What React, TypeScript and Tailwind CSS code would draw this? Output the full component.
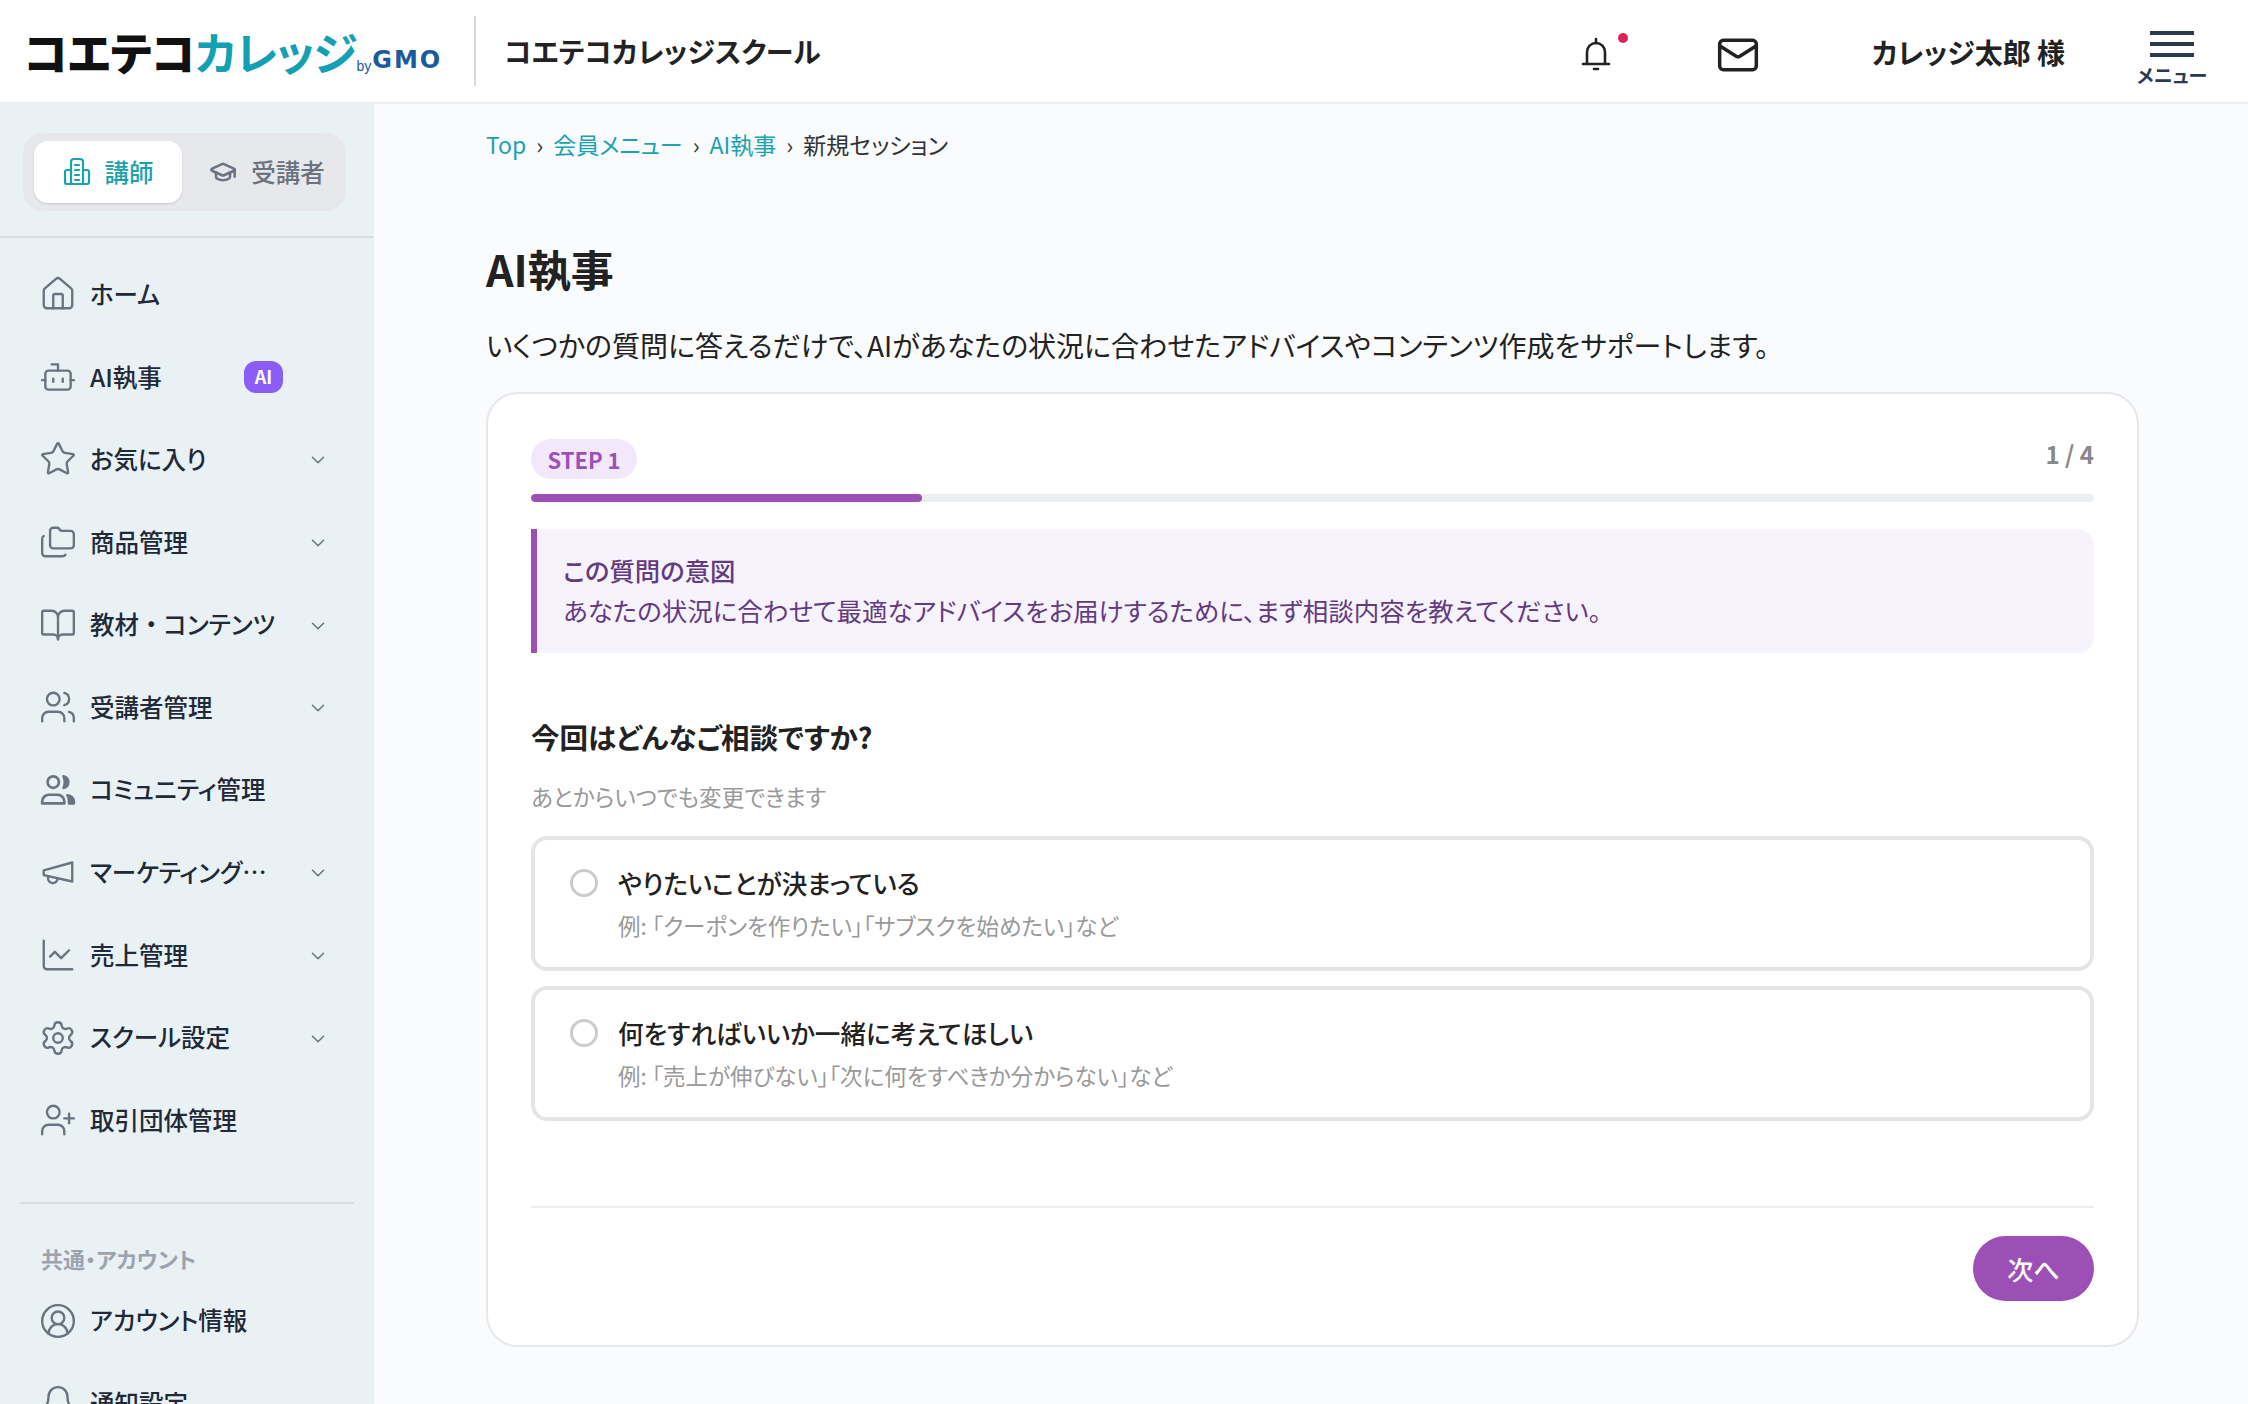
import {
  BookOpen,
  Bot,
  ChartLine,
  ChevronDown,
  CircleUserRound,
  Folders,
  GraduationCap,
  House,
  Mail,
  Settings,
  Star,
  UserPlus,
  Users,
} from 'lucide-react';
import type { ReactNode } from 'react';

const jp = "font-['Noto_Sans_CJK_JP','Noto_Sans',sans-serif] [font-feature-settings:'palt']";

function MegaphoneIcon() {
  return (
    <svg width="38" height="38" viewBox="0 0 24 24" fill="none" stroke="currentColor" strokeWidth="1.5" strokeLinecap="round" strokeLinejoin="round">
      <path d="m3 11 18-5v12L3 14v-3z" />
      <path d="M11.6 16.8a3 3 0 1 1-5.8-1.6" />
    </svg>
  );
}

function CommunityIcon() {
  return (
    <svg width="38" height="38" viewBox="0 0 24 24" fill="none" stroke="currentColor" strokeWidth="1.7" strokeLinecap="round" strokeLinejoin="round">
      <circle cx="9" cy="7" r="3.6" />
      <path d="M2 20.500v-1.200A4.300 4.300 0 0 1 6.300 15h5.400a4.300 4.300 0 0 1 4.300 4.300v1.200z" />
      <path d="M15.500 3.300a3.800 3.800 0 0 1 0 7.400c1-2.200 1-5.200 0-7.400z" fill="currentColor" />
      <path d="M18 15.300a4.200 4.200 0 0 1 4 4v1.200h-3v-1.500c0-1.400-.3-2.600-1-3.700z" fill="currentColor" />
    </svg>
  );
}

function BellIcon() {
  return (
    <svg width="32" height="36" viewBox="0 0 32 36" fill="none" stroke="#222" strokeWidth="2.6" strokeLinecap="round" strokeLinejoin="round">
      <path d="M3 27h26" />
      <path d="M7 27V15c0-5 4-9 9-9s9 4 9 9v12" />
      <path d="M16 2v4" />
      <path d="M14 32h4" />
    </svg>
  );
}

function BellIconGrey() {
  return (
    <svg width="38" height="38" viewBox="0 0 24 24" fill="none" stroke="currentColor" strokeWidth="1.5" strokeLinecap="round" strokeLinejoin="round">
      <path d="M10.300 21a2 2 0 0 0 3.400 0" />
      <path d="M3.300 15.300A1 1 0 0 0 4 17h16a1 1 0 0 0 .7-1.700C19.400 14 18 12.500 18 8A6 6 0 0 0 6 8c0 4.500-1.400 6-2.700 7.300" />
    </svg>
  );
}

function TeacherIcon() {
  return (
    <svg width="28" height="30" viewBox="0 0 28 30" fill="none" stroke="#1aa3ad" strokeWidth="2.2" strokeLinecap="round" strokeLinejoin="round">
      <path d="M8 27V5a3 3 0 0 1 3-3h6a3 3 0 0 1 3 3v22" />
      <path d="M8 13H4a2 2 0 0 0-2 2v10a2 2 0 0 0 2 2h20a2 2 0 0 0 2-2V15a2 2 0 0 0-2-2h-4" />
      <path d="M12 8h4M12 13h4M12 18h4M12 23h4" />
    </svg>
  );
}

type NavItem = { id: string; label: ReactNode; icon: ReactNode; arrow?: boolean; badge?: boolean };

const icon = { size: 38, strokeWidth: 1.5 };

const navItems: NavItem[] = [
  { id: 'home', label: 'ホーム', icon: <House {...icon} /> },
  { id: 'ai', label: 'AI執事', icon: <Bot {...icon} />, badge: true },
  { id: 'fav', label: 'お気に入り', icon: <Star {...icon} />, arrow: true },
  { id: 'items', label: '商品管理', icon: <Folders {...icon} />, arrow: true },
  {
    id: 'contents',
    label: (
      <>
        教材<span className="[font-feature-settings:normal]">・</span>コンテンツ
      </>
    ),
    icon: <BookOpen {...icon} />,
    arrow: true,
  },
  { id: 'students', label: '受講者管理', icon: <Users {...icon} />, arrow: true },
  { id: 'community', label: 'コミュニティ管理', icon: <CommunityIcon /> },
  { id: 'marketing', label: 'マーケティング…', icon: <MegaphoneIcon />, arrow: true },
  { id: 'sales', label: '売上管理', icon: <ChartLine {...icon} />, arrow: true },
  { id: 'school', label: 'スクール設定', icon: <Settings {...icon} />, arrow: true },
  { id: 'group', label: '取引団体管理', icon: <UserPlus {...icon} /> },
];

function NavRow({ item }: { item: NavItem }) {
  return (
    <div className="flex h-[82.6px] shrink-0 items-center pl-[38px] pr-[45px]">
      <span className="flex w-[40px] shrink-0 justify-center text-[#6b7280]">{item.icon}</span>
      <span className="ml-[12px] flex-1 whitespace-nowrap text-[24.5px] font-medium text-[#1f2937]">{item.label}</span>
      {item.badge && (
        <span className="mr-[46px] flex h-[32px] w-[39px] items-center justify-center rounded-[12px] bg-[#8b5cf6] text-[18px] font-bold text-white">
          AI
        </span>
      )}
      {item.arrow && <ChevronDown size={22} strokeWidth={1.7} className="mt-[2px] text-[#6b7280]" />}
    </div>
  );
}

function Sidebar() {
  return (
    <aside className="flex w-[374px] shrink-0 flex-col overflow-hidden bg-[#e9f1f5]">
      <div className="h-[134px] shrink-0 border-b-2 border-[#d9dee3] px-[23px] pt-[29px]">
        <div className="flex h-[78px] w-[323px] items-center rounded-[20px] bg-[#e6e8eb] pl-[11px]">
          <div className="flex h-[62px] w-[148px] items-center justify-center gap-[14px] rounded-[14px] bg-white text-[24.5px] font-medium text-[#1aa3ad] shadow-sm">
            <TeacherIcon />
            講師
          </div>
          <div className="flex flex-1 items-center justify-center gap-[14px] pl-[6px] text-[24.5px] font-medium text-[#6b7280]">
            <GraduationCap size={28} strokeWidth={2.2} />
            受講者
          </div>
        </div>
      </div>
      <nav className="flex shrink-0 flex-col pt-[15px]">
        {navItems.map((item) => (
          <NavRow key={item.id} item={item} />
        ))}
      </nav>
      <div className="mx-[20px] mt-[40px] shrink-0 border-t-2 border-[#d9dee3]" />
      <div className="mt-[41px] shrink-0 pl-[41px] text-[22px] font-bold leading-[26px] text-[#9ca3af]">共通・アカウント</div>
      <div className="shrink-0 pt-[9px]">
        <NavRow item={{ id: 'account', label: 'アカウント情報', icon: <CircleUserRound {...icon} /> }} />
        <NavRow item={{ id: 'notify', label: '通知設定', icon: <BellIconGrey /> }} />
      </div>
    </aside>
  );
}

function Header() {
  return (
    <header className="flex h-[104px] shrink-0 items-center border-b-2 border-[#eceef2] bg-white pl-[24px]">
      <div className="flex items-end whitespace-nowrap leading-none">
        <span className="text-[45px] font-black tracking-[-0.5px] text-[#111]">コエテコ</span>
        <span className="text-[45px] font-bold tracking-[-1px] text-[#12a0b2]">カレッジ</span>
        <span className="mb-[1px] font-['Liberation_Sans',sans-serif] text-[14px] text-[#1c5a9c]">by</span>
        <span className="ml-[1px] font-['DejaVu_Sans',sans-serif] text-[24px] font-bold leading-[28px] tracking-[2px] text-[#1c5a9c]">GMO</span>
      </div>
      <div className="ml-[32px] h-[70px] w-[2px] bg-[#d8d8d8]" />
      <span className="ml-[28px] text-[28px] font-bold text-[#222]">コエテコカレッジスクール</span>
      <div className="ml-auto flex items-center">
        <div className="relative mt-[8px] flex h-[40px] w-[32px] items-center justify-center">
          <BellIcon />
          <span className="absolute right-[-16px] top-[-2px] h-[10px] w-[10px] rounded-full bg-[#d9245a]" />
        </div>
        <Mail size={44} strokeWidth={1.9} className="ml-[104px] mt-[8px] text-[#222]" />
        <span className="ml-[112px] mt-[2px] whitespace-nowrap text-[28px] font-bold text-[#222]">カレッジ太郎 様</span>
        <div className="ml-[72px] mr-[41px] flex w-[70px] flex-col items-center pt-[10px]">
          <div className="flex w-[44px] flex-col gap-[7px] pt-[2px]">
            <span className="h-[4px] bg-[#2a3a50]" />
            <span className="h-[4px] bg-[#2a3a50]" />
            <span className="h-[4px] bg-[#2a3a50]" />
          </div>
          <span className="mt-[8px] whitespace-nowrap text-[19px] font-bold leading-none text-[#2a3a50]">メニュー</span>
        </div>
      </div>
    </header>
  );
}

function Option({ title, note }: { title: string; note: string }) {
  return (
    <div className="flex h-[135px] rounded-[16px] border-[4px] border-[#e5e5e5] pl-[35px] pt-[25px]">
      <span className="mt-[4px] h-[28px] w-[28px] shrink-0 rounded-full border-[3px] border-[#cccccc]" />
      <div className="ml-[20px]">
        <div className="text-[25.6px] font-medium leading-[36px] text-[#222]">{title}</div>
        <div className="mt-[8px] text-[22.5px] leading-[32px] text-[#999]">{note}</div>
      </div>
    </div>
  );
}

function Main() {
  return (
    <main className="min-w-0 flex-1 overflow-hidden bg-[#fafbfd] pl-[112px] pr-[109px]">
      <div className="flex h-[80px] items-center gap-[10px] text-[23px]">
        <span className="text-[#1aa3ad]">Top</span>
        <span className="text-[#333]">›</span>
        <span className="text-[#1aa3ad]">会員メニュー</span>
        <span className="text-[#333]">›</span>
        <span className="text-[#1aa3ad]">AI執事</span>
        <span className="text-[#333]">›</span>
        <span className="text-[#333]">新規セッション</span>
      </div>
      <h1 className="mt-[51px] text-[43px] font-bold leading-[66px] text-[#222]">AI執事</h1>
      <p className="mt-[24px] whitespace-nowrap text-[28px] leading-[40px] text-[#222]">
        いくつかの質問に答えるだけで、AIがあなたの状況に合わせたアドバイスやコンテンツ作成をサポートします。
      </p>
      <section className="mt-[27px] h-[955px] rounded-[32px] border-2 border-[#e5e7eb] bg-white px-[43px] pt-[45px]">
        <div className="flex items-start justify-between">
          <span className="flex h-[40px] w-[106px] items-center justify-center rounded-full bg-[#f3e8fb] pt-[1px] text-[22px] font-bold text-[#9b51b5]">
            STEP 1
          </span>
          <span className="mt-[-3px] text-[24px] font-bold leading-[36px] text-[#888]">1 / 4</span>
        </div>
        <div className="mt-[15px] h-[8px] overflow-hidden rounded-full bg-[#eceff1]">
          <div className="h-full w-1/4 rounded-full bg-[#9c50b6]" />
        </div>
        <div className="mt-[27px] h-[124px] rounded-r-[16px] border-l-[6px] border-[#9c50b6] bg-[#f6f3fd] pl-[26px] pt-[22px] text-[#643a80]">
          <div className="text-[25.4px] font-medium leading-[38px]">この質問の意図</div>
          <div className="mt-[1px] text-[25.5px] leading-[40px]">あなたの状況に合わせて最適なアドバイスをお届けするために、まず相談内容を教えてください。</div>
        </div>
        <h2 className="mt-[61px] text-[28.5px] font-bold leading-[46px] text-[#222]">今回はどんなご相談ですか?</h2>
        <p className="mt-[19px] text-[22.6px] leading-[36px] text-[#999]">あとからいつでも変更できます</p>
        <div className="mt-[21px] flex flex-col gap-[15px]">
          <Option title="やりたいことが決まっている" note="例: 「クーポンを作りたい」「サブスクを始めたい」など" />
          <Option title="何をすればいいか一緒に考えてほしい" note="例: 「売上が伸びない」「次に何をすべきか分からない」など" />
        </div>
        <div className="mt-[85px] border-t-2 border-[#eeeeee] pt-[28px]">
          <div className="flex justify-end">
            <button type="button" className="h-[65px] w-[121px] rounded-full bg-[#9c50b6] text-[26px] font-medium text-white">
              次へ
            </button>
          </div>
        </div>
      </section>
    </main>
  );
}

export default function App() {
  return (
    <div className={`flex h-screen flex-col overflow-hidden bg-white ${jp}`}>
      <Header />
      <div className="flex min-h-0 flex-1">
        <Sidebar />
        <Main />
      </div>
    </div>
  );
}
